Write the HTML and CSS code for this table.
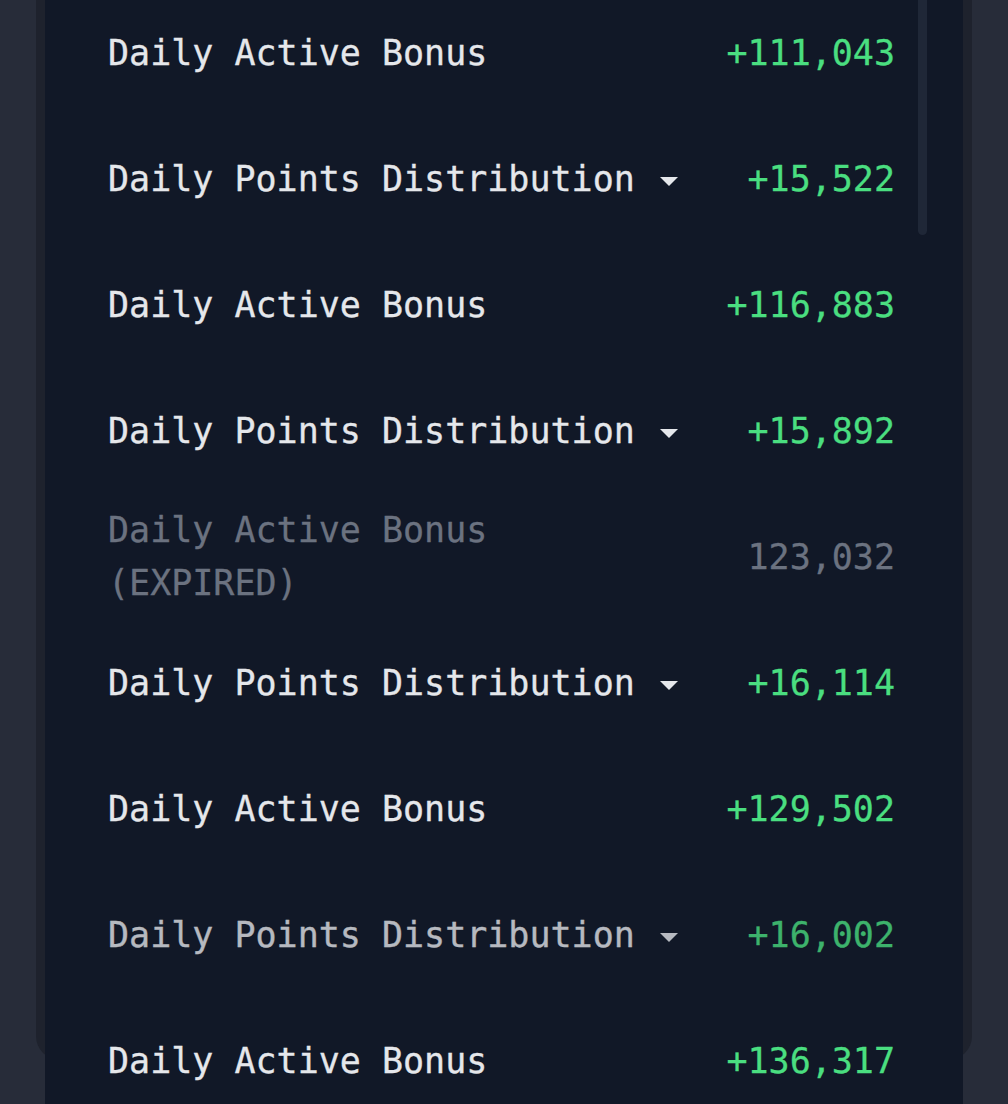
FILE: index.html
```html
<!DOCTYPE html>
<html>
<head>
<meta charset="utf-8">
<link rel="stylesheet" href="styles.css">
</head>
<body>
<div class="page">
  <div class="card">
    <div class="list">
      <div class="scrollbar"></div>
      <div class="rows">
        <div class="row"><span class="label">Daily Active Bonus</span><span class="amount">+111,043</span></div>
        <div class="row"><span class="label">Daily Points Distribution <span class="caret"></span></span><span class="amount">+15,522</span></div>
        <div class="row"><span class="label">Daily Active Bonus</span><span class="amount">+116,883</span></div>
        <div class="row"><span class="label">Daily Points Distribution <span class="caret"></span></span><span class="amount">+15,892</span></div>
        <div class="row expired"><span class="label">Daily Active Bonus<br>(EXPIRED)</span><span class="amount">123,032</span></div>
        <div class="row"><span class="label">Daily Points Distribution <span class="caret"></span></span><span class="amount">+16,114</span></div>
        <div class="row"><span class="label">Daily Active Bonus</span><span class="amount">+129,502</span></div>
        <div class="row dim"><span class="label">Daily Points Distribution <span class="caret"></span></span><span class="amount">+16,002</span></div>
        <div class="row"><span class="label">Daily Active Bonus</span><span class="amount">+136,317</span></div>
      </div>
    </div>
  </div>
</div>
</body>
</html>
```

FILE: styles.css
```css
html, body {
  margin: 0;
  padding: 0;
  background: #272c39;
  height: 1104px;
  overflow: hidden;
}

.page {
  padding: 0 36px;
}

.card {
  height: 1060px;
  background: #1e222d;
  border-radius: 0 0 24px 24px;
  padding: 0 9px;
}

.list {
  position: relative;
  background: #111827;
  height: 1104px;
  overflow: hidden;
}

.scrollbar {
  position: absolute;
  left: 873px;
  top: -10px;
  width: 9px;
  height: 245px;
  border-radius: 5px;
  background: #1f2737;
}

.rows {
  margin-top: -10px;
  padding: 0 68px 0 63px;
}

.row {
  height: 126px;
  display: flex;
  align-items: center;
  justify-content: space-between;
  font-family: "DejaVu Sans Mono", monospace;
  font-size: 35px;
  line-height: 53px;
  color: #e5e7eb;
  -webkit-text-stroke: 0.3px currentColor;
}

.amount {
  color: #4ade80;
}

.caret {
  display: inline-block;
  width: 0;
  height: 0;
  border-left: 9px solid transparent;
  border-right: 9px solid transparent;
  border-top: 9px solid #e5e7eb;
  vertical-align: middle;
  margin-left: 4px;
  position: relative;
  top: 1px;
}

.expired .label,
.expired .amount {
  color: #6b7280;
}

.dim {
  opacity: 0.78;
}
```
